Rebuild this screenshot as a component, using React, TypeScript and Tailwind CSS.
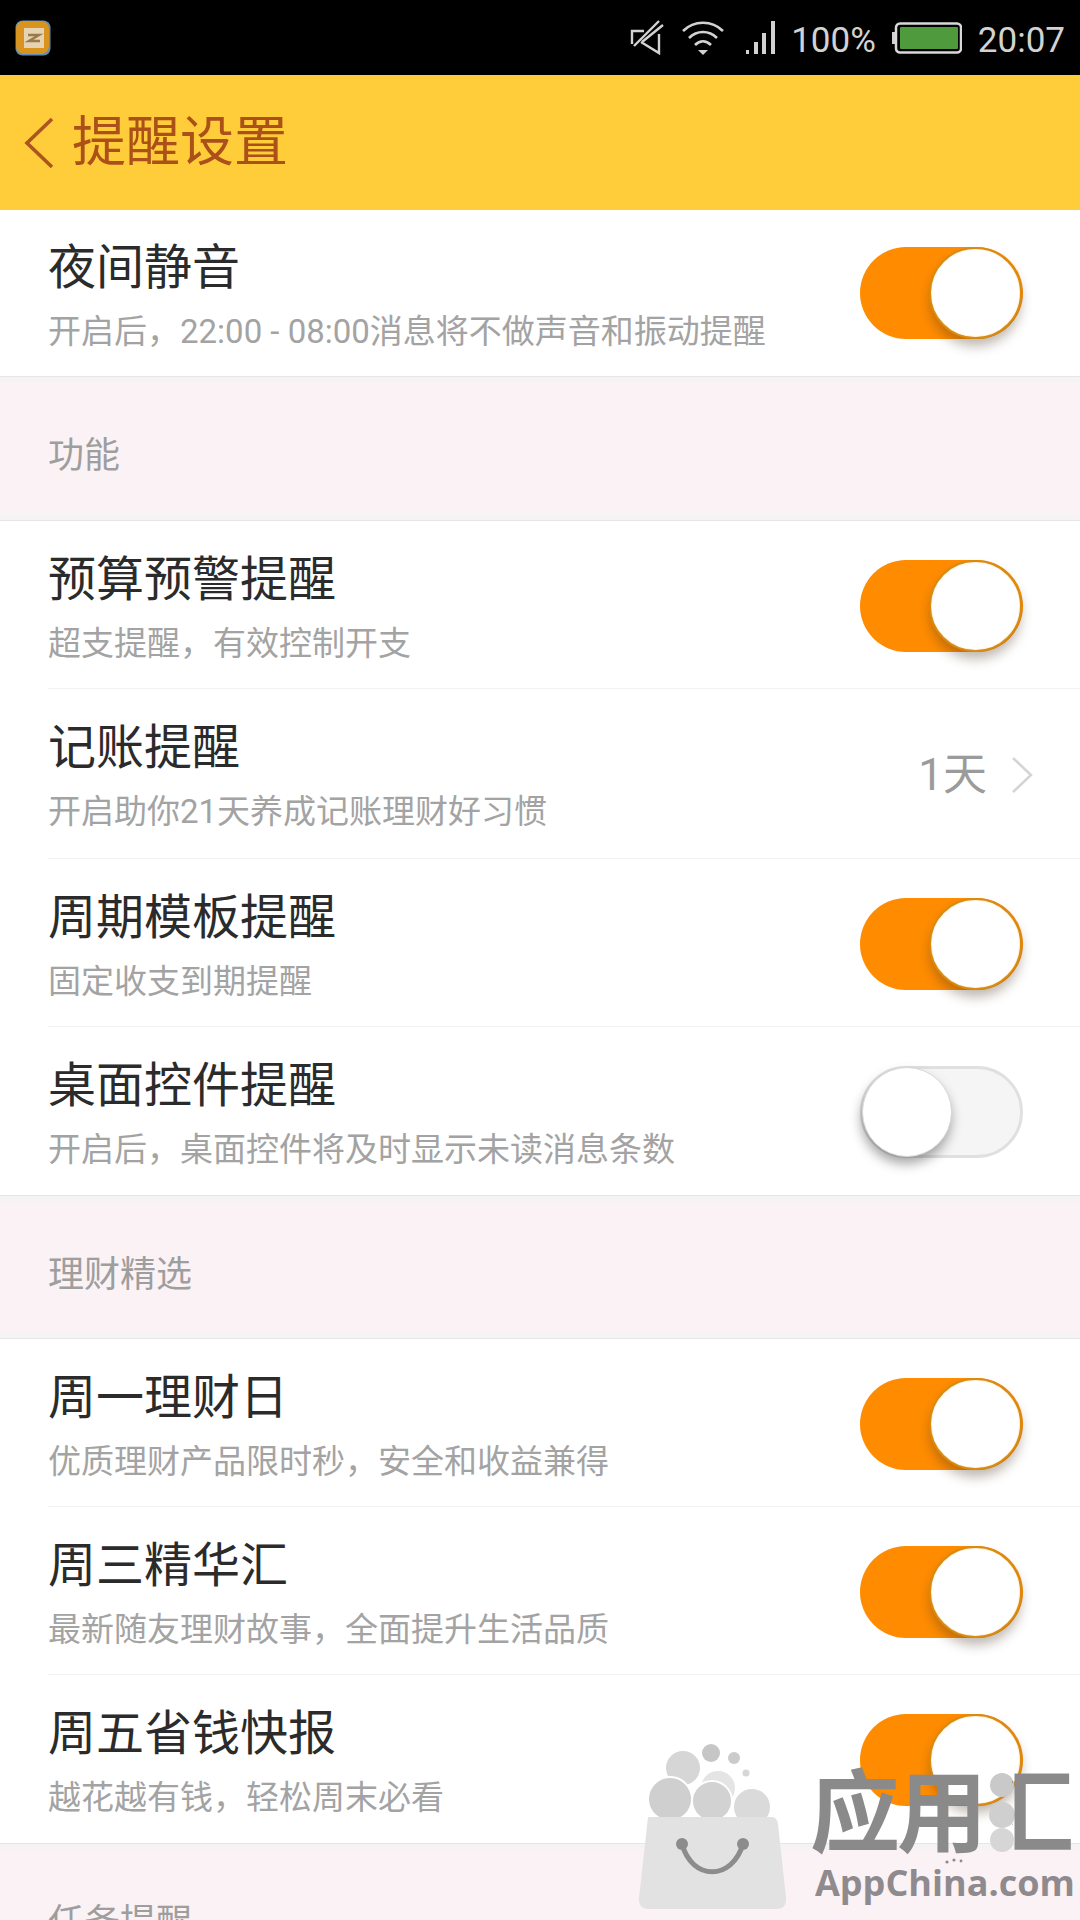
const cjk = "font-['Roboto','Noto_Sans_CJK_SC',sans-serif]";

function Toggle({ on }: { on: boolean }) {
  return on ? (
    <div className="relative h-[92px] w-[163px] shrink-0 rounded-full bg-[#ff8c00]">
      <div className="absolute left-[70px] top-[1px] h-[90px] w-[91px] rounded-full border-2 border-[#fdf3e2] bg-white shadow-[0_8px_12px_rgba(70,50,30,0.35)] outline-2 -outline-offset-1 outline-[#d98a10]" />
    </div>
  ) : (
    <div className="relative h-[92px] w-[163px] shrink-0 rounded-full border-[3px] border-[#e0e0e0] bg-[#f5f5f5]">
      <div className="absolute left-[-1px] top-[-2px] h-[90px] w-[90px] rounded-full border border-[#d8d8d8] bg-white shadow-[-1px_7px_12px_rgba(0,0,0,0.35)]" />
    </div>
  );
}

function Row({
  title,
  sub,
  on,
  value,
  last,
  h,
  first,
}: {
  title: string;
  sub: string;
  on?: boolean;
  value?: string;
  last?: boolean;
  h: string;
  first?: boolean;
}) {
  return (
    <div className={`relative flex ${h} items-start justify-between bg-white pl-[48px] pr-[57px]`}>
      <div className={first ? "pt-[26px]" : "pt-[27px]"}>
        <div className="h-[64px] text-[48px] leading-[64px] text-[#2b2b2b]">{title}</div>
        <div className="h-[64px] text-[33px] leading-[64px] text-[#a3a3a3]">{sub}</div>
      </div>
      {value ? (
        <div className="mt-[56px] mr-[-10px] flex items-center">
          <span className="text-[44px] leading-[60px] text-[#9b9b9b]">{value}</span>
          <svg className="ml-[24px]" width="22" height="38" viewBox="0 0 22 38" fill="none">
            <path d="M2 2 L20 19 L2 36" stroke="#d4d4d4" strokeWidth="2.5" />
          </svg>
        </div>
      ) : (
        <div className={first ? "mt-[37px]" : "mt-[39px]"}>
          <Toggle on={!!on} />
        </div>
      )}
      {!last && <div className="absolute bottom-0 left-[48px] right-0 h-[1px] bg-[#f2f2f2]" />}
    </div>
  );
}

function Section({ label, h }: { label: string; h: string }) {
  return (
    <div
      className={`${h} border-y border-[#e6e6e6] bg-[#fbf2f5] pl-[48px] pt-[54px] text-[36px] leading-[50px] text-[#9e9e9e] shadow-[inset_0_6px_0_#f5f3f4,inset_0_-6px_0_#f5f3f4]`}
    >
      {label}
    </div>
  );
}

function StatusBar() {
  return (
    <div className="flex h-[75px] items-center bg-black pl-[15px] pr-[15px]">
      <svg width="36" height="36" viewBox="0 0 36 36">
        <rect x="0.5" y="0.5" width="35" height="35" rx="7" fill="#5f8fb5" />
        <rect x="1" y="1" width="33" height="33" rx="8" fill="#d9941f" />
        <rect x="9" y="8" width="20" height="20" fill="#e5d3b3" />
        <path d="M13 15 H24 L14 21 H25" stroke="#9a7a4a" strokeWidth="2.5" fill="none" />
      </svg>
      <div className="ml-auto flex items-center text-[#d2d2d2]">
        <svg width="34" height="36" viewBox="0 0 34 36" fill="none" stroke="#d2d2d2" strokeWidth="2.4">
          <path d="M14 11 H2 V24 M4 26 L29 1 M12 22 L33 5 M29 14 V33 L11 22" />
        </svg>
        <svg className="ml-[18px]" width="42" height="36" viewBox="0 0 42 36" fill="none" stroke="#d2d2d2" strokeWidth="2.6">
          <path d="M1 11 C12 0 30 0 41 11" />
          <path d="M7 18 C15 10 27 10 35 18" />
          <path d="M13 25 C18 20 24 20 29 25" />
          <path d="M16 30 H26 L21 35 Z" fill="#d2d2d2" stroke="none" />
        </svg>
        <svg className="ml-[22px]" width="30" height="36" viewBox="0 0 30 36" fill="#d2d2d2">
          <rect x="0" y="30" width="3" height="4" />
          <rect x="8" y="22" width="4" height="12" />
          <rect x="16" y="13" width="4" height="21" />
          <rect x="25" y="1" width="4" height="33" />
        </svg>
        <span className="mt-[6px] ml-[15px] text-[35px] leading-[40px]">100%</span>
        <svg className="ml-[16px]" width="70" height="32" viewBox="0 0 70 32">
          <rect x="0" y="10" width="4" height="12" fill="#d2d2d2" />
          <rect x="4" y="1.5" width="65" height="29" rx="4" fill="none" stroke="#d8d8d8" strokeWidth="2.5" />
          <rect x="8" y="5" width="58" height="22" rx="1" fill="#4f9a3d" />
        </svg>
        <span className="mt-[6px] ml-[16px] text-[35px] leading-[40px]">20:07</span>
      </div>
    </div>
  );
}

function Header() {
  return (
    <div className="flex h-[135px] items-center bg-[#ffcc3a] pl-[24px]">
      <svg width="30" height="52" viewBox="0 0 30 52" fill="none">
        <path d="M28 2 L3 26 L28 50" stroke="#ab5520" strokeWidth="3.6" />
      </svg>
      <span className="ml-[18px] text-[54px] leading-[70px] text-[#ab5018]">提醒设置</span>
    </div>
  );
}

function Watermark() {
  return (
    <div className="pointer-events-none absolute bottom-0 right-0 h-[220px] w-[460px]">
      <svg className="absolute inset-0" width="460" height="220" viewBox="0 0 460 220">
        <circle cx="63" cy="68" r="17" fill="#d6d6d6" />
        <circle cx="91" cy="53" r="9" fill="#c6c6c6" />
        <circle cx="114" cy="58" r="6" fill="#cbcbcb" />
        <circle cx="126" cy="73" r="3.5" fill="#d6d6d6" />
        <circle cx="98" cy="88" r="17" fill="#e4e4e4" />
        <circle cx="50" cy="99" r="22" fill="#cfcfcf" stroke="#ffffff" strokeWidth="2" />
        <circle cx="92" cy="101" r="20" fill="#d2d2d2" stroke="#ffffff" strokeWidth="2" />
        <circle cx="132" cy="107" r="19" fill="#dadada" stroke="#ffffff" strokeWidth="2" />
        <path d="M28 117 H152 Q157 117 158 124 L166 198 Q167 209 156 209 H30 Q18 209 19 198 L28 117 Z" fill="#e2e2e2" />
        <path d="M62 144 C72 181 112 181 123 144" fill="none" stroke="#8c8c8c" strokeWidth="5" />
        <circle cx="62" cy="144" r="6" fill="#8c8c8c" />
        <circle cx="123" cy="144" r="6" fill="#8c8c8c" />
        <circle cx="382" cy="85" r="12" fill="#c9c9c9" />
        <circle cx="382" cy="115" r="13" fill="#cfcfcf" />
        <circle cx="382" cy="140" r="12" fill="#d6d6d6" />
        <circle cx="327" cy="162" r="1.6" fill="#8c8c8c" />
        <circle cx="334" cy="160" r="1.6" fill="#8c8c8c" />
        <circle cx="341" cy="161" r="1.4" fill="#8c8c8c" />
      </svg>
      <div className="absolute left-[190px] top-[56px] whitespace-nowrap font-['Noto_Sans_CJK_SC',sans-serif] text-[90px] font-bold leading-[100px] tracking-[-3px] text-[#8a8a8a]">
        应用<span className="bg-[linear-gradient(90deg,transparent_32%,#8a8a8a_32%)] bg-clip-text text-transparent">汇</span>
      </div>
      <div className="absolute left-[195px] top-[158px] whitespace-nowrap font-['Open_Sans',sans-serif] text-[36px] font-bold leading-[50px] text-[#8f8a8d]">
        AppChina.com
      </div>
    </div>
  );
}

export default function App() {
  return (
    <div className={`relative h-[1920px] w-[1080px] overflow-hidden bg-white ${cjk}`}>
      <StatusBar />
      <Header />
      <Row title="夜间静音" sub="开启后，22:00 - 08:00消息将不做声音和振动提醒" on last first h="h-[166px]" />
      <Section label="功能" h="h-[145px]" />
      <Row title="预算预警提醒" sub="超支提醒，有效控制开支" on h="h-[168px]" />
      <Row title="记账提醒" sub="开启助你21天养成记账理财好习惯" value="1天" h="h-[170px]" />
      <Row title="周期模板提醒" sub="固定收支到期提醒" on h="h-[168px]" />
      <Row title="桌面控件提醒" sub="开启后，桌面控件将及时显示未读消息条数" on={false} last h="h-[168px]" />
      <Section label="理财精选" h="h-[144px]" />
      <Row title="周一理财日" sub="优质理财产品限时秒，安全和收益兼得" on h="h-[168px]" />
      <Row title="周三精华汇" sub="最新随友理财故事，全面提升生活品质" on h="h-[168px]" />
      <Row title="周五省钱快报" sub="越花越有钱，轻松周末必看" on last h="h-[168px]" />
      <Section label="任务提醒" h="h-[145px]" />
      <Watermark />
    </div>
  );
}
